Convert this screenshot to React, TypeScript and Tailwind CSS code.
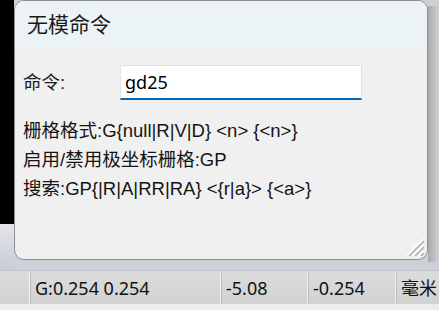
import React from "react";

const cjk = { fontFamily: '"Liberation Sans", "Noto Sans CJK SC", sans-serif' };
const ui = { fontFamily: '"Noto Sans", "Noto Sans CJK SC", sans-serif' };

const lines = [
  "栅格格式:G{null|R|V|D} <n> {<n>}",
  "启用/禁用极坐标栅格:GP",
  "搜索:GP{|R|A|RR|RA} <{r|a}> {<a>}",
];

const Grip = () => (
  <svg width="22" height="22" viewBox="0 0 22 22" className="absolute right-[2px] bottom-[2px]">
    <g stroke="#ffffff" strokeWidth="2">
      <line x1="4" y1="21" x2="21" y2="4" />
      <line x1="10" y1="21" x2="21" y2="10" />
      <line x1="16" y1="21" x2="21" y2="16" />
    </g>
    <g stroke="#a8a8a8" strokeWidth="1.5">
      <line x1="6" y1="21" x2="21" y2="6" />
      <line x1="12" y1="21" x2="21" y2="12" />
      <line x1="18" y1="21" x2="21" y2="18" />
    </g>
  </svg>
);

const StatusCell = ({ text, width }: { text: string; width: string }) => (
  <div className={`${width} shrink-0 h-full flex items-center pl-[5px] border-l border-[#f4f4f4] shadow-[inset_1px_0_0_#b9b9b9]`}>
    <span className="text-[18px] text-[#111] leading-none" style={ui}>{text}</span>
  </div>
);

export default function App() {
  return (
    <div className="w-[439px] h-[310px] flex flex-col bg-[#cdcfd9] overflow-hidden">
      <div className="h-[270px] flex">
        <div className="w-[14px] shrink-0 flex flex-col">
          <div className="h-[224px] bg-black" />
          <div className="flex-1 bg-gradient-to-b from-[#e4e5ea] to-[#c9cbd6]" />
        </div>

        <div className="w-[414px] shrink-0 h-[260px] relative flex flex-col rounded-[10px] border border-[#8e8e8e] bg-[#f0f0f0] overflow-hidden">
          <div className="h-[48px] bg-[#ecf3f6] flex items-center pl-[12px]">
            <span className="text-[21px] text-[#1a1a1a]" style={cjk}>无模命令</span>
          </div>
          <div className="flex flex-col pl-[8px] pt-[16px]">
            <div className="flex items-center h-[35px]">
              <span className="w-[97px] text-[18.5px] text-[#1b1b1b]" style={cjk}>命令:</span>
              <div className="w-[242px] h-[35px] bg-white border border-[#e2e2e2] border-b-2 border-b-[#0067c0] flex items-center pl-[4px]">
                <span className="text-[18px] text-black" style={ui}>gd25</span>
              </div>
            </div>
            <div className="flex flex-col mt-[16px]">
              {lines.map((l) => (
                <div key={l} className="h-[29px] flex items-center text-[18.5px] text-[#141414] whitespace-nowrap" style={cjk}>
                  {l}
                </div>
              ))}
            </div>
          </div>
          <Grip />
        </div>

        <div className="flex-1 flex flex-col pt-[6px] pb-[8px]">
          <div className="flex-1 bg-gradient-to-r from-[#a9a9a9] to-[#d2d2d4] rounded-tr-[4px] rounded-br-[6px]" />
        </div>
      </div>

      <div className="h-[34px] flex bg-gradient-to-b from-[#dcdcdc] to-[#d2d2d2] border-t border-[#bfc0c8]">
        <div className="w-[29px] shrink-0 h-full" />
        <StatusCell text="G:0.254 0.254" width="w-[191px]" />
        <StatusCell text="-5.08" width="w-[87px]" />
        <StatusCell text="-0.254" width="w-[88px]" />
        <StatusCell text="毫米" width="w-[60px]" />
      </div>
      <div className="flex-1 bg-[#ececec]" />
    </div>
  );
}
